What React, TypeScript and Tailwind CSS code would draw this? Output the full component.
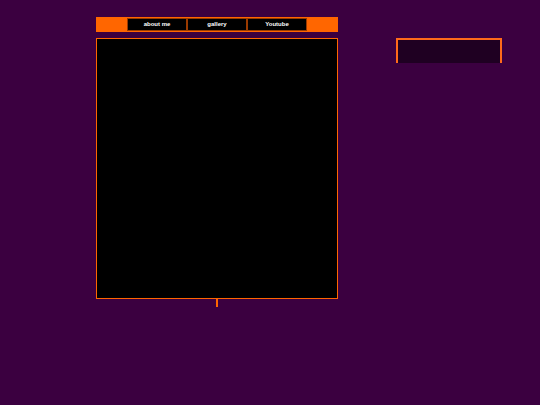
export default function App() {
  const links = ["about me", "gallery", "Youtube"];
  return (
    <div
      className="flex h-[405px] w-[540px] items-start bg-[#3b0040] pl-[96px] pt-[17px]"
      style={{ fontFamily: '"Liberation Sans", Arial, sans-serif' }}
    >
      <div className="flex w-[242px] flex-col items-center">
        <nav className="flex h-[15px] w-full items-stretch bg-[#ff6600] py-px pl-[31px]">
          {links.map((l) => (
            <span
              key={l}
              className="flex w-[60px] items-center justify-center border border-[#9a3a00] bg-black text-[6px] font-bold text-white"
            >
              {l}
            </span>
          ))}
        </nav>
        <main className="mt-[6px] h-[261px] w-full border border-[#ff6600] bg-black" />
        <div className="h-[8px] w-[2px] bg-[#ff6600]" />
      </div>
      <aside className="ml-[58px] mt-[21px] h-[25px] w-[106px] border-x-2 border-t-2 border-[#ff6a1a] bg-[#1f0022]" />
    </div>
  );
}
